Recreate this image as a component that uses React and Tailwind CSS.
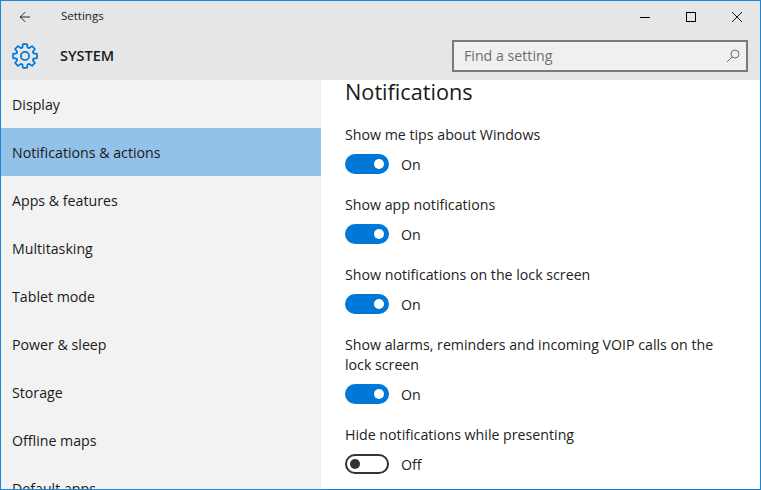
import React from 'react';
import { ArrowLeft } from 'lucide-react';

const navItems = ['Display', 'Notifications & actions', 'Apps & features', 'Multitasking', 'Tablet mode', 'Power & sleep', 'Storage', 'Offline maps', 'Default apps'];

const options = [
    { label: 'Show me tips about Windows', on: true },
    { label: 'Show app notifications', on: true },
    { label: 'Show notifications on the lock screen', on: true },
    { label: 'Show alarms, reminders and incoming VOIP calls on the lock screen', on: true },
    { label: 'Hide notifications while presenting', on: false },
];

// 8 tooth cog outline, centre 12,12
const gearPath = () => {
    const pts = [];
    for (let i = 0; i < 8; i++) {
        const a = (i * Math.PI) / 4;
        [[8.2, -0.3], [11.2, -0.17], [11.2, 0.17], [8.2, 0.3]].forEach(([r, d]) => {
            pts.push(`${(12 + r * Math.sin(a + d)).toFixed(2)} ${(12 - r * Math.cos(a + d)).toFixed(2)}`);
        });
    }
    return `M${pts.join('L')}Z`;
};

const Toggle = ({ on }) => (
    <div className="flex items-center h-5 mt-[9px]">
        {on ? (
            <div className="w-11 h-5 rounded-full bg-[#0078d7] flex items-center justify-end pr-[5px]">
                <div className="w-[10px] h-[10px] rounded-full bg-white"></div>
            </div>
        ) : (
            <div className="w-11 h-5 rounded-full border-2 border-[#333333] flex items-center pl-[3px]">
                <div className="w-[10px] h-[10px] rounded-full bg-[#333333]"></div>
            </div>
        )}
        <span className="ml-3 pt-[2px] leading-5 text-[#222222]">{on ? 'On' : 'Off'}</span>
    </div>
);

const App = () => {
    return (
        <div className="w-[761px] h-[490px] overflow-hidden border border-[#1a86d8] flex flex-col bg-white text-[14.2px] text-[#1a1a1a] font-['Open_Sans','Liberation_Sans',sans-serif]">
            {/* Title bar + system header */}
            <div className="h-[79px] shrink-0 bg-[#e6e6e6] flex flex-col">
                <div className="h-[31px] flex items-center">
                    <ArrowLeft size={16} strokeWidth={1.25} className="ml-4 text-black" />
                    <span className="ml-[28px] mb-[2px] text-[11.5px] text-[#222222]">Settings</span>
                    <div className="ml-auto flex items-center">
                        <div className="w-[46px] flex justify-center">
                            <svg width="10" height="10" viewBox="0 0 10 10"><path d="M0 5.5H10" stroke="#000" /></svg>
                        </div>
                        <div className="w-[46px] flex justify-center">
                            <svg width="10" height="10" viewBox="0 0 10 10"><rect x="0.5" y="0.5" width="9" height="9" fill="none" stroke="#000" /></svg>
                        </div>
                        <div className="w-[46px] flex justify-center">
                            <svg width="10" height="10" viewBox="0 0 10 10"><path d="M0 0L10 10M10 0L0 10" stroke="#000" strokeWidth="0.9" /></svg>
                        </div>
                    </div>
                </div>
                <div className="flex-1 flex items-center">
                    <svg width="26" height="26" viewBox="0 0 24 24" fill="none" stroke="#0078d7" strokeWidth="1.6" strokeLinejoin="round" className="ml-[11px]">
                        <path d={gearPath()} />
                        <circle cx="12" cy="12" r="3.8" />
                    </svg>
                    <span className="ml-[22px] text-[14.5px] font-semibold text-[#1a1a1a]">SYSTEM</span>
                    <div className="ml-auto mr-[12px] w-[296px] h-[32px] border-2 border-[#7a7a7a] bg-[#f0f0f0] flex items-center pl-[10px] pr-[6px]">
                        <span className="text-[#6e6e6e]">Find a setting</span>
                        <svg width="14" height="14" viewBox="0 0 14 14" fill="none" stroke="#6e6e6e" className="ml-auto">
                            <circle cx="9" cy="5" r="4" />
                            <path d="M6 8L1 13" />
                        </svg>
                    </div>
                </div>
            </div>

            <div className="flex-1 flex min-h-0">
                {/* Sidebar */}
                <div className="w-[320px] shrink-0 bg-[#f2f2f2] overflow-hidden">
                    {navItems.map((item, i) => (
                        <div key={i} className={`h-12 shrink-0 flex items-center pl-[11px] pt-[1px] ${i === 1 ? 'bg-[#92c1e9]' : ''}`}>
                            {item}
                        </div>
                    ))}
                </div>

                {/* Content */}
                <div className="flex-1 pl-6 pr-10 overflow-hidden">
                    <div className="text-[21.7px] leading-[24px] text-[#1a1a1a]">Notifications</div>
                    <div className="mt-[21px] flex flex-col gap-[21px]">
                        {options.map((opt, i) => (
                            <div key={i}>
                                <div className="leading-5 text-[#222222]">{opt.label}</div>
                                <Toggle on={opt.on} />
                            </div>
                        ))}
                    </div>
                </div>
            </div>
        </div>
    );
};

export default App;
